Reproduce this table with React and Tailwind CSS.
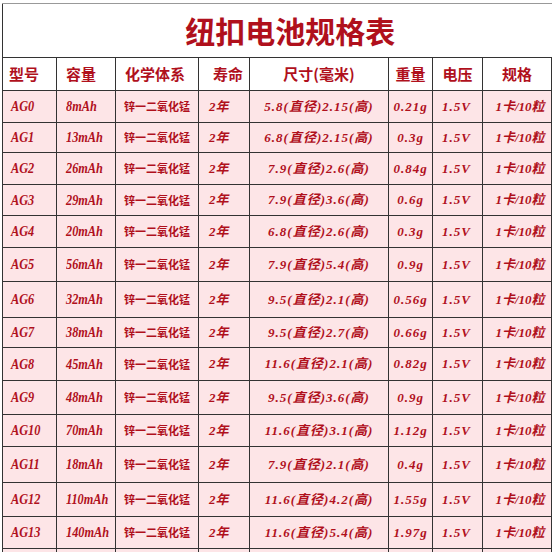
import React from "react";

const rows = [
  ["AG0", "8mAh", "5.8(直径)2.15(高)", "0.21g", 32],
  ["AG1", "13mAh", "6.8(直径)2.15(高)", "0.3g", 30],
  ["AG2", "26mAh", "7.9(直径)2.6(高)", "0.84g", 32],
  ["AG3", "29mAh", "7.9(直径)3.6(高)", "0.6g", 31],
  ["AG4", "20mAh", "6.8(直径)2.6(高)", "0.3g", 32],
  ["AG5", "56mAh", "7.9(直径)5.4(高)", "0.9g", 34],
  ["AG6", "32mAh", "9.5(直径)2.1(高)", "0.56g", 36],
  ["AG7", "38mAh", "9.5(直径)2.7(高)", "0.66g", 30],
  ["AG8", "45mAh", "11.6(直径)2.1(高)", "0.82g", 33],
  ["AG9", "48mAh", "9.5(直径)3.6(高)", "0.9g", 34],
  ["AG10", "70mAh", "11.6(直径)3.1(高)", "1.12g", 32],
  ["AG11", "18mAh", "7.9(直径)2.1(高)", "0.4g", 36],
  ["AG12", "110mAh", "11.6(直径)4.2(高)", "1.55g", 34],
  ["AG13", "140mAh", "11.6(直径)5.4(高)", "1.97g", 32],
];

const font = { fontFamily: '"Liberation Serif", "Noto Sans CJK SC", serif' };
const hfont = { fontFamily: '"Noto Sans CJK SC", sans-serif' };

export default function App() {
  const cell = "border border-[#333] align-middle p-0";
  return (
    <div className="w-[552px] h-[552px] overflow-hidden bg-white">
      <table className="ml-[2px] mt-[3px] table-fixed border-collapse w-[549px] text-[#b0101c]">
        <colgroup>
          <col className="w-[54px]" />
          <col className="w-[59px]" />
          <col className="w-[83px]" />
          <col className="w-[51px]" />
          <col className="w-[139px]" />
          <col className="w-[44px]" />
          <col className="w-[50px]" />
          <col className="w-[69px]" />
        </colgroup>
        <tbody>
          <tr className="h-[54px]">
            <td colSpan={8} className="border-t border-t-[#999] border-l border-l-[#333] border-b border-b-[#333] text-center align-middle pl-[26px]">
              <span className="text-[30px] font-bold" style={hfont}>纽扣电池规格表</span>
            </td>
          </tr>
          <tr className="h-[33px] bg-white text-[15px] font-bold" style={hfont}>
            <td className={cell + " pl-[6px]"}>型号</td>
            <td className={cell + " pl-[9px]"}>容量</td>
            <td className={cell + " border-l-[#888] pl-[9px]"}>化学体系</td>
            <td className={cell + " text-center pl-[8px]"}>寿命</td>
            <td className={cell + " text-center"}>尺寸(毫米)</td>
            <td className={cell + " text-center"}>重量</td>
            <td className={cell + " border-l-[#888] text-center"}>电压</td>
            <td className={cell + " text-center"}>规格</td>
          </tr>
          {rows.map(([m, c, s, w, h]) => (
            <tr key={m} style={{ height: h, ...font }} className="bg-[#fde5e7] font-bold italic">
              <td className={cell + " pl-[8px] text-[15px]"}>
                <span className="inline-block scale-x-[0.82] origin-left">{m}</span>
              </td>
              <td className={cell + " pl-[9px] text-[15px]"}>
                <span className="inline-block scale-x-[0.82] origin-left whitespace-nowrap">{c}</span>
              </td>
              <td className={cell + " border-l-[#888] text-center text-[11px] not-italic"} style={hfont}>锌一二氧化锰</td>
              <td className={cell + " pl-[10px] text-[13px]"}>2年</td>
              <td className={cell + " text-center text-[13px] tracking-[1px]"}>{s}</td>
              <td className={cell + " text-center text-[13px] tracking-[1px]"}>{w}</td>
              <td className={cell + " border-l-[#888] pl-[9px] text-[13px] tracking-[1px]"}>1.5V</td>
              <td className={cell + " text-center text-[13px] pl-[6px]"}>1卡/10粒</td>
            </tr>
          ))}
          <tr className="h-[32px] bg-[#fde5e7]">
            {Array.from({ length: 8 }).map((_, i) => (
              <td key={i} className={cell}>&nbsp;</td>
            ))}
          </tr>
        </tbody>
      </table>
    </div>
  );
}
